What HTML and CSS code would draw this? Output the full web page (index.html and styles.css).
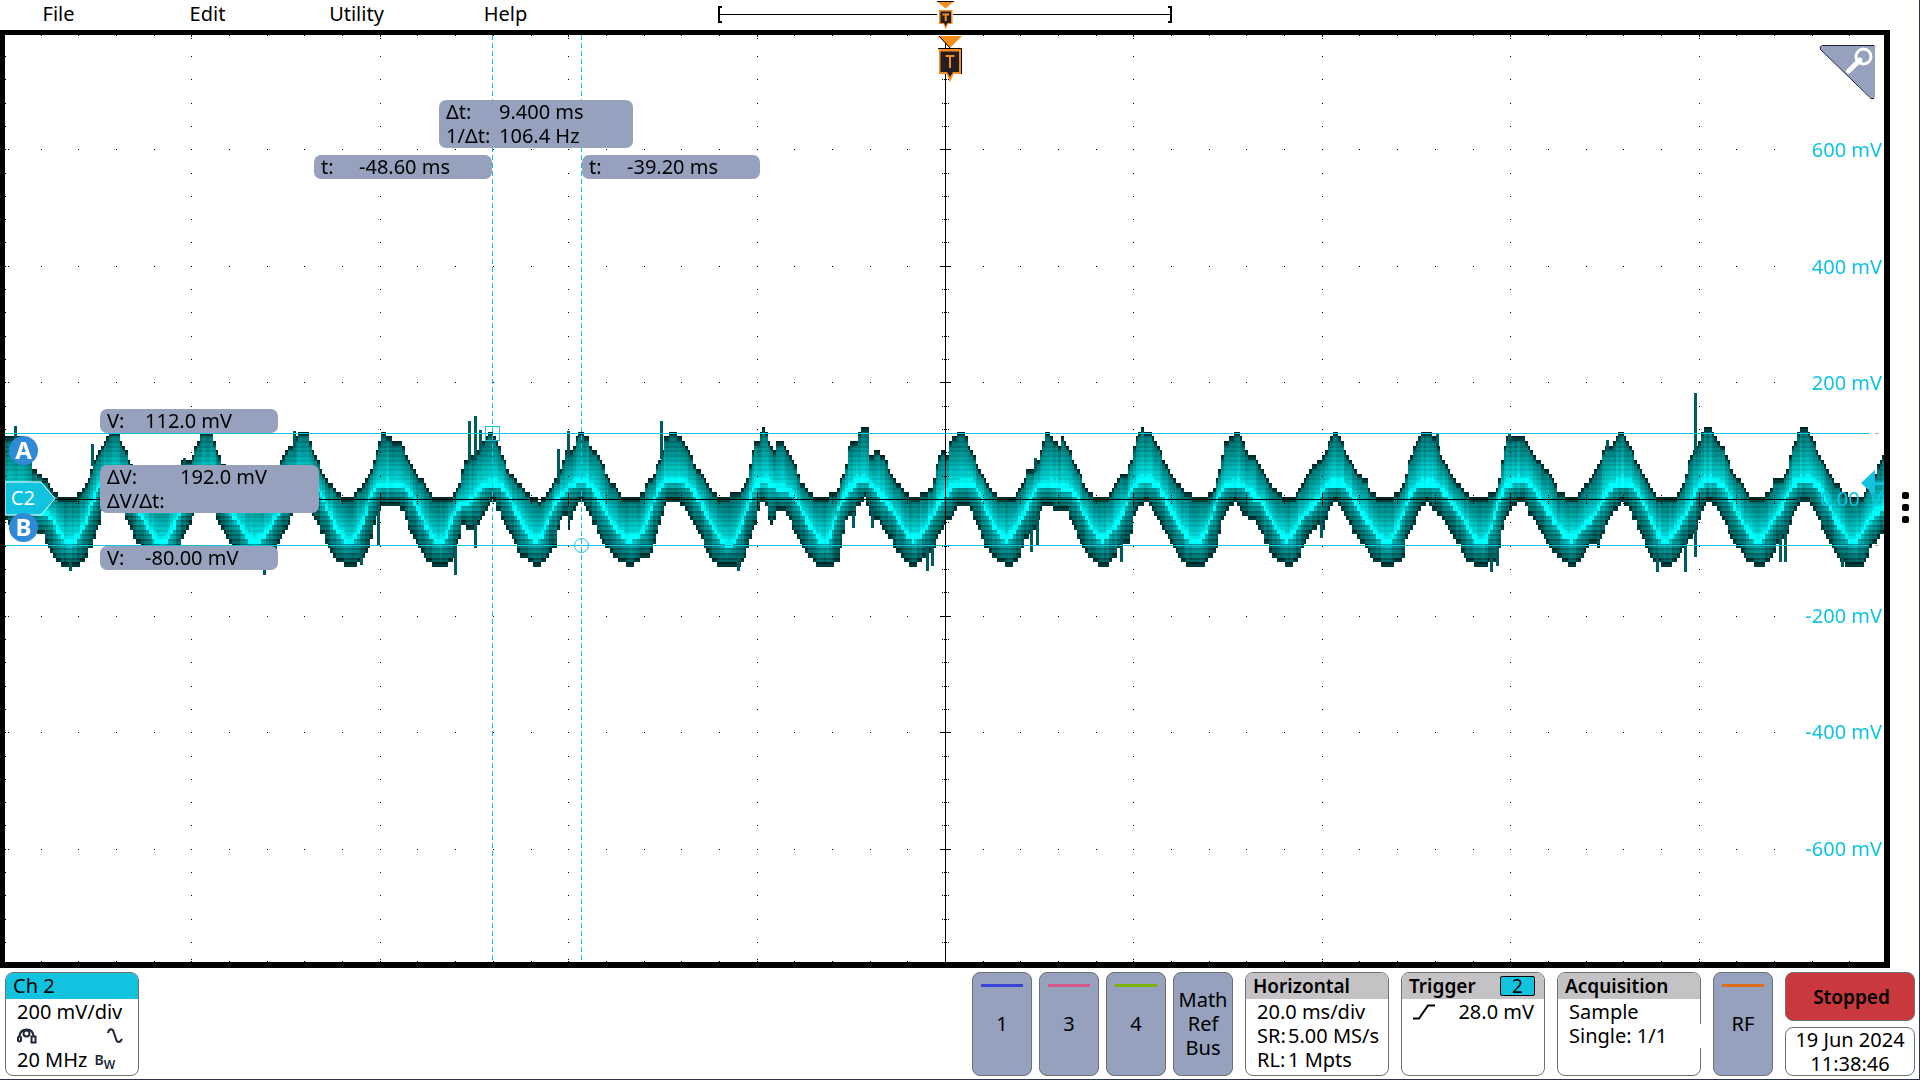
FILE: index.html
```html
<!DOCTYPE html>
<html lang="en">
<head>
<meta charset="utf-8">
<title>Oscilloscope</title>
<link rel="stylesheet" href="styles.css">
</head>
<body>
<header class="topbar">
  <nav class="menu">
    <button type="button">File</button>
    <button type="button">Edit</button>
    <button type="button">Utility</button>
    <button type="button">Help</button>
  </nav>
  <svg class="overview" width="456" height="30" viewBox="0 0 456 30">
    <path d="M5 7H2V22H5M451 7H454V22H451" fill="none" stroke="#000" stroke-width="2"/>
    <path d="M2 14.500H220M236 14.500H454" stroke="#000"/>
    <path d="M220 1.500H237L228.500 8.500Z" fill="#f78d1e"/>
    <path d="M220 1.500H237" stroke="#000"/>
    <path d="M222 10H235.500V24H231L228.700 29.500L226.400 24H222Z" fill="#f78d1e"/>
    <path d="M223.500 11.500H234V23H230.500L228.700 26L227 23H223.500Z" fill="#231f20"/>
    <path d="M225.500 14.500H232M228.700 14V21" stroke="#f78d1e" stroke-width="2"/>
  </svg>
</header>

<main class="workspace">
  <section class="screen">
    <canvas class="plot" id="plot"></canvas>

    <svg class="trigger-mark" width="24" height="48" viewBox="0 0 24 48">
      <path d="M0 1H24L12 13Z" fill="#f78d1e"/>
      <path d="M0 .5H24" stroke="#fff"/>
      <path d="M1 1L12 13" stroke="#000"/>
      <path d="M1 14H23V39H15.500L12 47.500L8.500 39H1Z" fill="#f78d1e"/>
      <path d="M0 13.500H23.500V39" fill="none" stroke="#000"/>
      <path d="M2.500 16.500H21V37H15L12 42L9 37H2.500Z" fill="#231f20"/>
      <path d="M7.500 21H16.500M12 20V33" stroke="#f78d1e" stroke-width="2"/>
    </svg>

    <button type="button" class="zoom" aria-label="Zoom">
      <svg width="58" height="56" viewBox="0 0 58 56">
        <path d="M3.500 .500H54Q56 .500 56 2.500V52Q55 55 52 53L1.500 4.500Q0 1.500 3.500 .500Z" fill="#95a1bd"/>
        <path d="M56 1.500L55 .500H3.500Q0 1.500 1.500 4.500L52 53.500H55" fill="none" stroke="#1c2233"/>
        <path d="M29.500 26L41 15" stroke="#fff" stroke-width="5" stroke-linecap="round"/>
        <circle cx="44.500" cy="11.500" r="7.500" fill="none" stroke="#fff" stroke-width="3"/>
      </svg>
    </button>

    <div class="scale">
      <span>600 mV</span><span>400 mV</span><span>200 mV</span><span class="zero">0.00&nbsp; V</span><span>-200 mV</span><span>-400 mV</span><span>-600 mV</span>
    </div>

    <svg class="level" width="26" height="26" viewBox="0 0 26 26">
      <path d="M0 13L14 0V26Z" fill="#12c3e0"/><path d="M13 13.500H26" stroke="#12c3e0" stroke-width="3"/>
    </svg>

    <svg class="flag" width="51" height="35" viewBox="0 0 51 35">
      <path d="M0 1H36L50 17.500L36 34H0Z" fill="#12c3e0" stroke="#fff"/>
      <text class="flag-text" x="6" y="24">C2</text>
    </svg>
    <span class="knob knob-a">A</span>
    <span class="knob knob-b">B</span>

    <dl class="readout delta-t"><dt>Δt:</dt><dd>9.400 ms</dd><dt>1/Δt:</dt><dd>106.4 Hz</dd></dl>
    <dl class="readout time-a"><dt>t:</dt><dd>-48.60 ms</dd></dl>
    <dl class="readout time-b"><dt>t:</dt><dd>-39.20 ms</dd></dl>
    <dl class="readout volt-a"><dt>V:</dt><dd>112.0 mV</dd></dl>
    <dl class="readout delta-v"><dt>ΔV:</dt><dd>192.0 mV</dd><dt>ΔV/Δt:</dt><dd></dd></dl>
    <dl class="readout volt-b"><dt>V:</dt><dd>-80.00 mV</dd></dl>
  </section>
  <button type="button" class="drawer" aria-label="Results bar"><i></i><i></i><i></i></button>
</main>

<footer class="settings">
  <button type="button" class="card channel">
    <span class="card-head cyan">Ch 2</span>
    <span class="card-body">
      <span class="line">200 mV/div</span>
      <span class="line icons">
        <svg width="20" height="16" viewBox="0 0 20 16" fill="none" stroke="#20263a" stroke-width="2">
          <path d="M2.500 8C3 3 6 1.500 10 1.500S16 4 16.500 8"/><circle cx="9.500" cy="5.500" r="3"/>
          <rect x="1" y="8.500" width="3" height="5" rx="1.500"/><rect x="14.500" y="8.500" width="4" height="6"/>
        </svg>
        <svg width="16" height="16" viewBox="0 0 16 16" fill="none" stroke="#20263a" stroke-width="2">
          <path d="M1 5C2 0 6 0 7 5L9 11C10 15 13 15 15 11"/>
        </svg>
      </span>
      <span class="line bandwidth">20 MHz <small>B<sub>W</sub></small></span>
    </span>
  </button>

  <div class="sources">
    <button type="button" class="card source"><i class="blue"></i><span>1</span></button>
    <button type="button" class="card source"><i class="pink"></i><span>3</span></button>
    <button type="button" class="card source"><i class="green"></i><span>4</span></button>
    <button type="button" class="card source math"><span>Math<br>Ref<br>Bus</span></button>
  </div>

  <button type="button" class="card">
    <span class="card-head">Horizontal</span>
    <span class="card-body">
      <span class="line">20.0 ms/div</span>
      <span class="line pair"><span>SR:</span><span>5.00 MS/s</span></span>
      <span class="line pair"><span>RL:</span><span>1 Mpts</span></span>
    </span>
  </button>
  <button type="button" class="card">
    <span class="card-head">Trigger<b class="badge">2</b></span>
    <span class="card-body">
      <span class="line slope">
        <svg width="22" height="16" viewBox="0 0 22 16"><path d="M0 14.500H6L15 1.500H22" fill="none" stroke="#000" stroke-width="2"/></svg>
        <span>28.0 mV</span>
      </span>
    </span>
  </button>
  <button type="button" class="card acquisition">
    <span class="card-head">Acquisition</span>
    <span class="card-body">
      <span class="line">Sample</span>
      <span class="line cover">Single: 1/1</span>
    </span>
  </button>
  <button type="button" class="card source"><i class="orange"></i><span>RF</span></button>

  <div class="status">
    <button type="button" class="card stopped">Stopped</button>
    <button type="button" class="card clock">19 Jun 2024<br>11:38:46</button>
  </div>
</footer>
<script src="plot.js"></script>
</body>
</html>
```
FILE: styles.css
```css
* { box-sizing: border-box; }

body {
  margin: 0;
  min-height: 100vh;
  display: grid;
  grid-template-rows: 30px 1fr 111px;
  background: #fff;
  color: #000;
  font: 20px/24px "Noto Sans", "Open Sans", sans-serif;
  border-right: 1px solid #2b3350;
  border-bottom: 1px solid #2b3350;
}

button {
  font: inherit;
  color: inherit;
  background: none;
  border: 0;
  padding: 0;
  cursor: pointer;
}

svg { display: block; }

/* Menu bar */
.topbar {
  display: grid;
  grid-template-columns: 1fr 456px 1fr;
  padding-right: 29px;
}
.menu { display: flex; gap: 32px; }
.menu button { width: 117px; height: 28px; }

/* Waveform view */
.workspace { display: grid; grid-template-columns: 1fr 29px; min-height: 0; }
.screen {
  position: relative;
  overflow: hidden;
  border: solid #000;
  border-width: 5px 6px 6px 5px;
}
.plot { position: absolute; inset: 0; width: 100%; height: 100%; }
.trigger-mark { position: absolute; left: calc(50% - 7px); top: 0; }
.zoom { position: absolute; right: 7px; top: 10px; }

.scale {
  position: absolute;
  top: 57px;
  bottom: 55px;
  right: 2px;
  display: grid;
  grid-template-rows: repeat(7, 1fr);
  align-items: center;
  justify-items: end;
  color: #12c3e0;
}
.level { position: absolute; right: -3px; top: 435px; }

.flag { position: absolute; left: 0; top: 446px; }
.flag-text { fill: #fff; font: 20px "Noto Sans", sans-serif; }
.knob {
  position: absolute;
  left: 4px;
  width: 29px;
  height: 29px;
  border-radius: 50%;
  background: #2f8bd8;
  color: #fff;
  font-weight: 700;
  font-size: 24px;
  line-height: 28px;
  text-align: center;
}
.knob-a { top: 401px; }
.knob-b { top: 478px; }

.readout {
  position: absolute;
  margin: 0;
  padding: 0 7px;
  display: grid;
  grid-template-columns: 38px 1fr;
  grid-auto-rows: 24px;
  width: 178px;
  border-radius: 7px;
  background: #95a1bd;
  white-space: nowrap;
}
.readout dd { margin: 0; }
.delta-t { left: 434px; top: 65px; width: 194px; grid-template-columns: 53px 1fr; }
.time-a { left: 309px; top: 120px; }
.time-b { left: 577px; top: 120px; }
.volt-a { left: 95px; top: 374px; }
.delta-v { left: 95px; top: 430px; width: 219px; grid-template-columns: 73px 1fr; }
.volt-b { left: 95px; top: 511px; }

.drawer {
  display: flex;
  flex-direction: column;
  align-items: center;
  justify-content: center;
  gap: 5px;
  padding: 16px 0 0 1px;
}
.drawer i { width: 7px; height: 7px; border-radius: 2px; background: #000; }

/* Settings bar */
.settings { display: flex; gap: 12px; padding: 4px 4px 3px 5px; }
.card {
  width: 144px;
  height: 104px;
  display: flex;
  flex-direction: column;
  border: 1px solid #6d7074;
  border-radius: 8px;
  background: #fff;
  text-align: left;
  white-space: nowrap;
}
.card-head {
  display: flex;
  align-items: center;
  justify-content: space-between;
  height: 26px;
  padding: 0 9px 0 7px;
  border-radius: 7px 7px 0 0;
  background: #c5c2c5;
  font-size: 19px;
  font-weight: 600;
}
.card-head.cyan { background: #12c3e0; font-size: 20px; font-weight: 400; }
.card-body { display: flex; flex-direction: column; padding: 1px 0 0 11px; }
.line { height: 24px; }
.channel { width: 134px; margin-right: auto; }
.icons { display: flex; justify-content: space-between; align-items: center; padding-right: 15px; }
.bandwidth { display: flex; align-items: center; gap: 7px; }
.line small { font-size: 14px; font-weight: 600; line-height: 20px; color: #20263a; }
.line sub { font-size: 12px; line-height: 0; }
.pair { display: grid; grid-template-columns: 31px 1fr; }
.slope { display: flex; justify-content: space-between; align-items: center; padding-right: 10px; }
.badge {
  width: 35px;
  height: 20px;
  border: 1px solid #000;
  border-radius: 2px;
  background: #12c3e0;
  font-weight: 400;
  line-height: 18px;
  text-align: center;
}
.cover { margin-right: -1px; background: #fff; }

.sources { display: flex; gap: 7px; }
.source {
  width: 60px;
  align-items: center;
  background: #95a1bd;
  text-align: center;
}
.source i { width: 42px; height: 3px; margin: 11px 0 25px; }
.math { justify-content: center; }
.blue { background: #3a43d8; }
.pink { background: #d9598c; }
.green { background: #7db400; }
.orange { background: #e06c1e; }

.status { display: flex; flex-direction: column; justify-content: space-between; }
.status .card { width: 130px; height: 49px; align-items: center; justify-content: center; text-align: center; }
.status .stopped { background: #c8383c; font-size: 19px; font-weight: 600; padding-left: 3px; }
```
FILE: plot.js
```js
// Reference grid: 10 x 8 divisions drawn on a 1879 x 927 surface.
const W = 1879, H = 927, LEFT = 5, TOP = 35;
const CX = 940, CY = 464, DX = 188.4, DY = 116.6;
const CYAN = '#12c3e0';

// Envelope samples as x,y pairs.
const upper = [5,436,24,436,33,468,45,478,54,492,62,497,76,497,85,486,90,474,92,460,100,450,106,440,108,432,118,432,125,448,130,463,150,490,165,497,178,480,182,460,192,458,195,446,200,434,211,433,216,450,222,462,235,480,250,490,262,497,274,485,281,460,286,450,295,440,300,432,308,432,312,450,319,463,325,476,333,488,342,497,352,497,356,491,362,487,370,470,377,450,381,432,383,427,388,438,400,440,405,451,412,468,424,482,433,495,450,497,458,486,463,465,465,458,472,457,484,440,489,431,493,432,500,447,508,470,519,482,526,492,538,500,546,496,553,482,558,478,565,453,572,450,578,431,584,432,590,445,600,458,606,475,614,485,622,495,632,499,642,492,650,478,658,465,665,437,673,431,679,436,690,450,694,463,704,478,713,492,722,497,738,492,747,478,752,455,754,441,758,440,763,425,767,435,773,453,776,441,782,440,786,450,794,462,800,480,808,493,820,497,835,493,840,482,845,468,848,450,852,440,856,445,859,430,863,425,868,427,870,455,874,455,876,445,882,455,888,465,894,480,902,487,907,493,916,500,922,493,932,488,938,460,941,450,947,453,949,441,953,436,960,431,965,432,970,447,976,460,982,475,990,488,1002,498,1014,498,1022,485,1028,468,1034,468,1039,460,1041,450,1044,435,1048,431,1053,438,1059,445,1062,437,1068,447,1073,460,1080,472,1085,487,1095,497,1108,499,1113,488,1120,473,1126,475,1132,455,1135,440,1138,435,1140,426,1143,431,1151,432,1158,445,1164,460,1173,478,1184,490,1195,498,1207,495,1215,485,1219,470,1224,445,1227,440,1233,434,1237,430,1243,440,1247,453,1256,455,1263,472,1270,483,1277,492,1287,497,1295,497,1303,480,1315,462,1325,455,1331,437,1336,431,1343,445,1350,460,1358,472,1366,480,1372,493,1384,499,1393,495,1402,487,1406,473,1410,455,1417,441,1424,431,1429,432,1436,436,1440,452,1447,468,1458,483,1468,495,1480,498,1492,493,1498,485,1502,460,1507,438,1512,436,1524,436,1530,448,1541,463,1552,478,1558,491,1568,497,1577,497,1584,487,1592,473,1600,460,1606,445,1612,447,1616,437,1622,430,1630,445,1636,460,1642,473,1650,485,1657,497,1672,499,1680,488,1685,476,1690,458,1700,440,1703,426,1711,427,1718,440,1725,450,1731,467,1742,485,1750,496,1762,498,1770,490,1775,477,1782,480,1788,467,1791,450,1799,428,1806,427,1815,445,1824,465,1832,478,1842,490,1852,498,1862,495,1873,478,1880,460,1886,448];
const lower = [5,520,15,526,42,532,48,545,56,562,70,567,80,564,90,548,97,530,102,510,107,500,118,500,125,515,133,535,143,550,150,563,164,568,176,560,182,540,190,525,198,503,210,500,222,530,235,548,243,563,258,567,267,558,275,552,280,540,288,525,295,505,300,500,308,503,316,520,325,540,333,557,350,568,358,562,368,550,373,530,378,510,384,505,402,508,408,525,418,545,428,562,442,568,453,560,458,540,463,520,468,530,477,525,482,515,490,503,494,502,503,520,513,540,520,555,538,567,548,558,555,545,560,520,565,512,569,528,574,510,578,501,584,502,592,520,602,540,615,557,632,567,642,555,650,557,656,535,661,520,666,503,676,500,685,508,692,520,702,540,710,557,722,568,738,566,744,558,750,540,756,520,760,503,765,500,770,525,774,518,779,508,786,512,794,530,805,550,815,565,828,568,838,560,841,545,845,520,850,515,853,520,857,505,865,498,869,515,878,518,888,535,897,550,905,562,914,566,924,558,935,545,940,530,950,517,958,505,968,503,975,520,985,545,995,558,1010,567,1018,558,1025,540,1030,535,1036,525,1040,510,1045,503,1055,510,1066,508,1075,530,1085,550,1095,563,1105,566,1115,555,1120,545,1130,540,1134,515,1140,505,1146,499,1153,508,1163,530,1175,550,1185,563,1198,568,1210,558,1217,545,1222,520,1228,508,1236,502,1244,515,1256,522,1264,540,1275,558,1287,565,1297,563,1302,548,1310,535,1317,525,1322,530,1329,508,1336,500,1346,518,1356,537,1368,550,1373,562,1388,566,1402,560,1406,540,1415,520,1421,505,1427,502,1440,515,1450,530,1460,545,1466,560,1480,566,1496,560,1502,530,1506,515,1512,505,1522,500,1530,515,1540,530,1553,550,1562,560,1574,567,1584,555,1592,540,1598,545,1604,530,1612,515,1623,500,1632,515,1642,535,1652,560,1668,567,1678,558,1688,540,1697,530,1703,505,1710,500,1720,510,1730,535,1745,558,1760,567,1770,560,1776,545,1788,530,1795,510,1805,498,1815,510,1825,535,1838,555,1845,565,1862,566,1872,545,1880,535,1886,528];
// Narrow glitches: x, y at the tip.
const peaks = [15,426,92,444,184,458,294,431,469,421,475,416,480,430,558,449,568,431,661,421,1035,458,1437,434,1509,434,1607,440,1695,393];
const dips = [70,571,264,575,361,565,378,545,455,575,475,548,738,571,853,528,872,528,927,571,932,566,1031,552,1037,546,1121,562,1321,538,1491,572,1497,566,1657,572,1685,572,1695,557,1780,562,1785,562,1842,567];

function at(list, x) {
  let i = 0;
  while (i < list.length - 4 && list[i + 2] < x) i += 2;
  const t = Math.min(1, Math.max(0, (x - list[i]) / (list[i + 2] - list[i])));
  return list[i + 1] + t * (list[i + 3] - list[i + 1]);
}

function noise(a, b) {
  const s = Math.sin(a * 12.9898 + b * 78.233) * 43758.5453;
  return s - Math.floor(s);
}

// Height of the brightest band: the lower edge pulled inwards, then smoothed.
function ridgeAt(x) {
  let sum = 0;
  for (let k = -3; k <= 3; k++) {
    const c = x + k * 2;
    sum += Math.min(at(lower, c - 7), at(lower, c), at(lower, c + 7));
  }
  return sum / 7 - TOP - 21;
}

function shade(y, top, ridge, bottom) {
  if (y < ridge) {
    const t = Math.max(0, (y - top) / Math.max(1, ridge - top));
    return 110 + 75 * Math.min(1, t * 1.5) + 75 * Math.pow(t, 5);
  }
  const d = y - ridge;
  if (d < 4) return 255;
  const t = Math.min(1, (d - 4) / Math.max(1, bottom - ridge - 4));
  return 205 - 125 * Math.pow(t, 0.6);
}

function drawTrace(ctx) {
  const rowH = 14 / 3, colW = 8 / 3;
  for (let c = 0; c * colW < W; c++) {
    const x0 = Math.round(c * colW), x1 = Math.round((c + 1) * colW);
    const x = x0 + LEFT + 1;
    const top = Math.round((at(upper, x) - TOP) / rowH);
    const bot = Math.round((at(lower, x) - TOP + 1) / rowH);
    const ridge = ridgeAt(x);
    const column = (noise(c, 1) - 0.5) * 26;
    for (let r = top; r < bot; r++) {
      const y0 = Math.round(r * rowH), y1 = Math.round((r + 1) * rowH);
      let g = shade(y0 + 2, top * rowH, ridge, bot * rowH) + column;
      if (r === top || r === bot - 1) g = 62;
      const cell = (v, y, h) => {
        const k = Math.max(30, Math.min(255, Math.round(v)));
        ctx.fillStyle = `rgb(0,${k},${k})`;
        ctx.fillRect(x0, y, x1 - x0, h);
      };
      cell(g, y0, y1 - y0);
      if (g < 235) cell(g - 24, y0, 2);
    }
  }
  ctx.fillStyle = '#005c5c';
  for (let i = 0; i < peaks.length; i += 2) {
    const y = peaks[i + 1] - TOP;
    ctx.fillRect(peaks[i] - LEFT - 1, y, 3, at(upper, peaks[i]) - TOP - y + 6);
  }
  for (let i = 0; i < dips.length; i += 2) {
    const y = at(lower, dips[i]) - TOP - 8;
    ctx.fillRect(dips[i] - LEFT - 1, y, 3, dips[i + 1] - TOP - y);
  }
}

function drawGrid(ctx) {
  ctx.fillStyle = '#000';
  const dot = (x, y, w = 1, h = 1) => ctx.fillRect(Math.round(x), Math.round(y), w, h);
  for (let i = -24; i <= 24; i++) {
    const x = CX + i * DX / 5, major = i % 5 === 0;
    dot(x, 0, 1, major ? 2 : 1);
    dot(x, H - 1);
    if (major) { dot(x, 3); dot(x, H - 3); }
    if (i <= 22) {
      for (let j = -3; j <= 3; j++) if (j) dot(x, CY + j * DY);
      for (let k = major ? -6 : -4; k <= (major ? 6 : 4); k += major ? 1 : 2) dot(x, CY + k);
    }
    if (major) for (let j = -19; j <= 19; j++) dot(x, CY + j * DY / 5);
  }
  for (let j = -19; j <= 19; j++) {
    const y = CY + j * DY / 5, major = j % 5 === 0;
    dot(0, y);
    if (major) dot(3, y);
    for (let k = major ? -5 : -3; k <= (major ? 5 : 3); k += major ? 1 : 2) dot(CX + k, y);
  }
  dot(CX, 0, 1, H);
  dot(0, CY, 1792, 1);
}

function drawCursors(ctx) {
  ctx.fillStyle = CYAN;
  for (const x of [487, 576]) for (let y = 0; y < H; y += 8) ctx.fillRect(x, y, 1, 5);
  for (const y of [398, 510]) {
    ctx.fillStyle = CYAN;
    ctx.fillRect(0, y, 1864, 1);
    ctx.fillStyle = '#b0aeb8';
    ctx.fillRect(1870, y, 4, 1);
  }
  ctx.strokeStyle = CYAN;
  ctx.strokeRect(480.5, 391.5, 14, 14);
  ctx.beginPath();
  ctx.arc(576.5, 510.5, 7, 0, Math.PI * 2);
  ctx.stroke();
}

function render() {
  const canvas = document.getElementById('plot');
  canvas.width = canvas.clientWidth;
  canvas.height = canvas.clientHeight;
  const ctx = canvas.getContext('2d');
  if (Math.abs(canvas.width - W) > 2 || Math.abs(canvas.height - H) > 2) {
    ctx.scale(canvas.width / W, canvas.height / H);
  }
  drawTrace(ctx);
  drawGrid(ctx);
  drawCursors(ctx);
}

window.addEventListener('resize', render);
render();
```
